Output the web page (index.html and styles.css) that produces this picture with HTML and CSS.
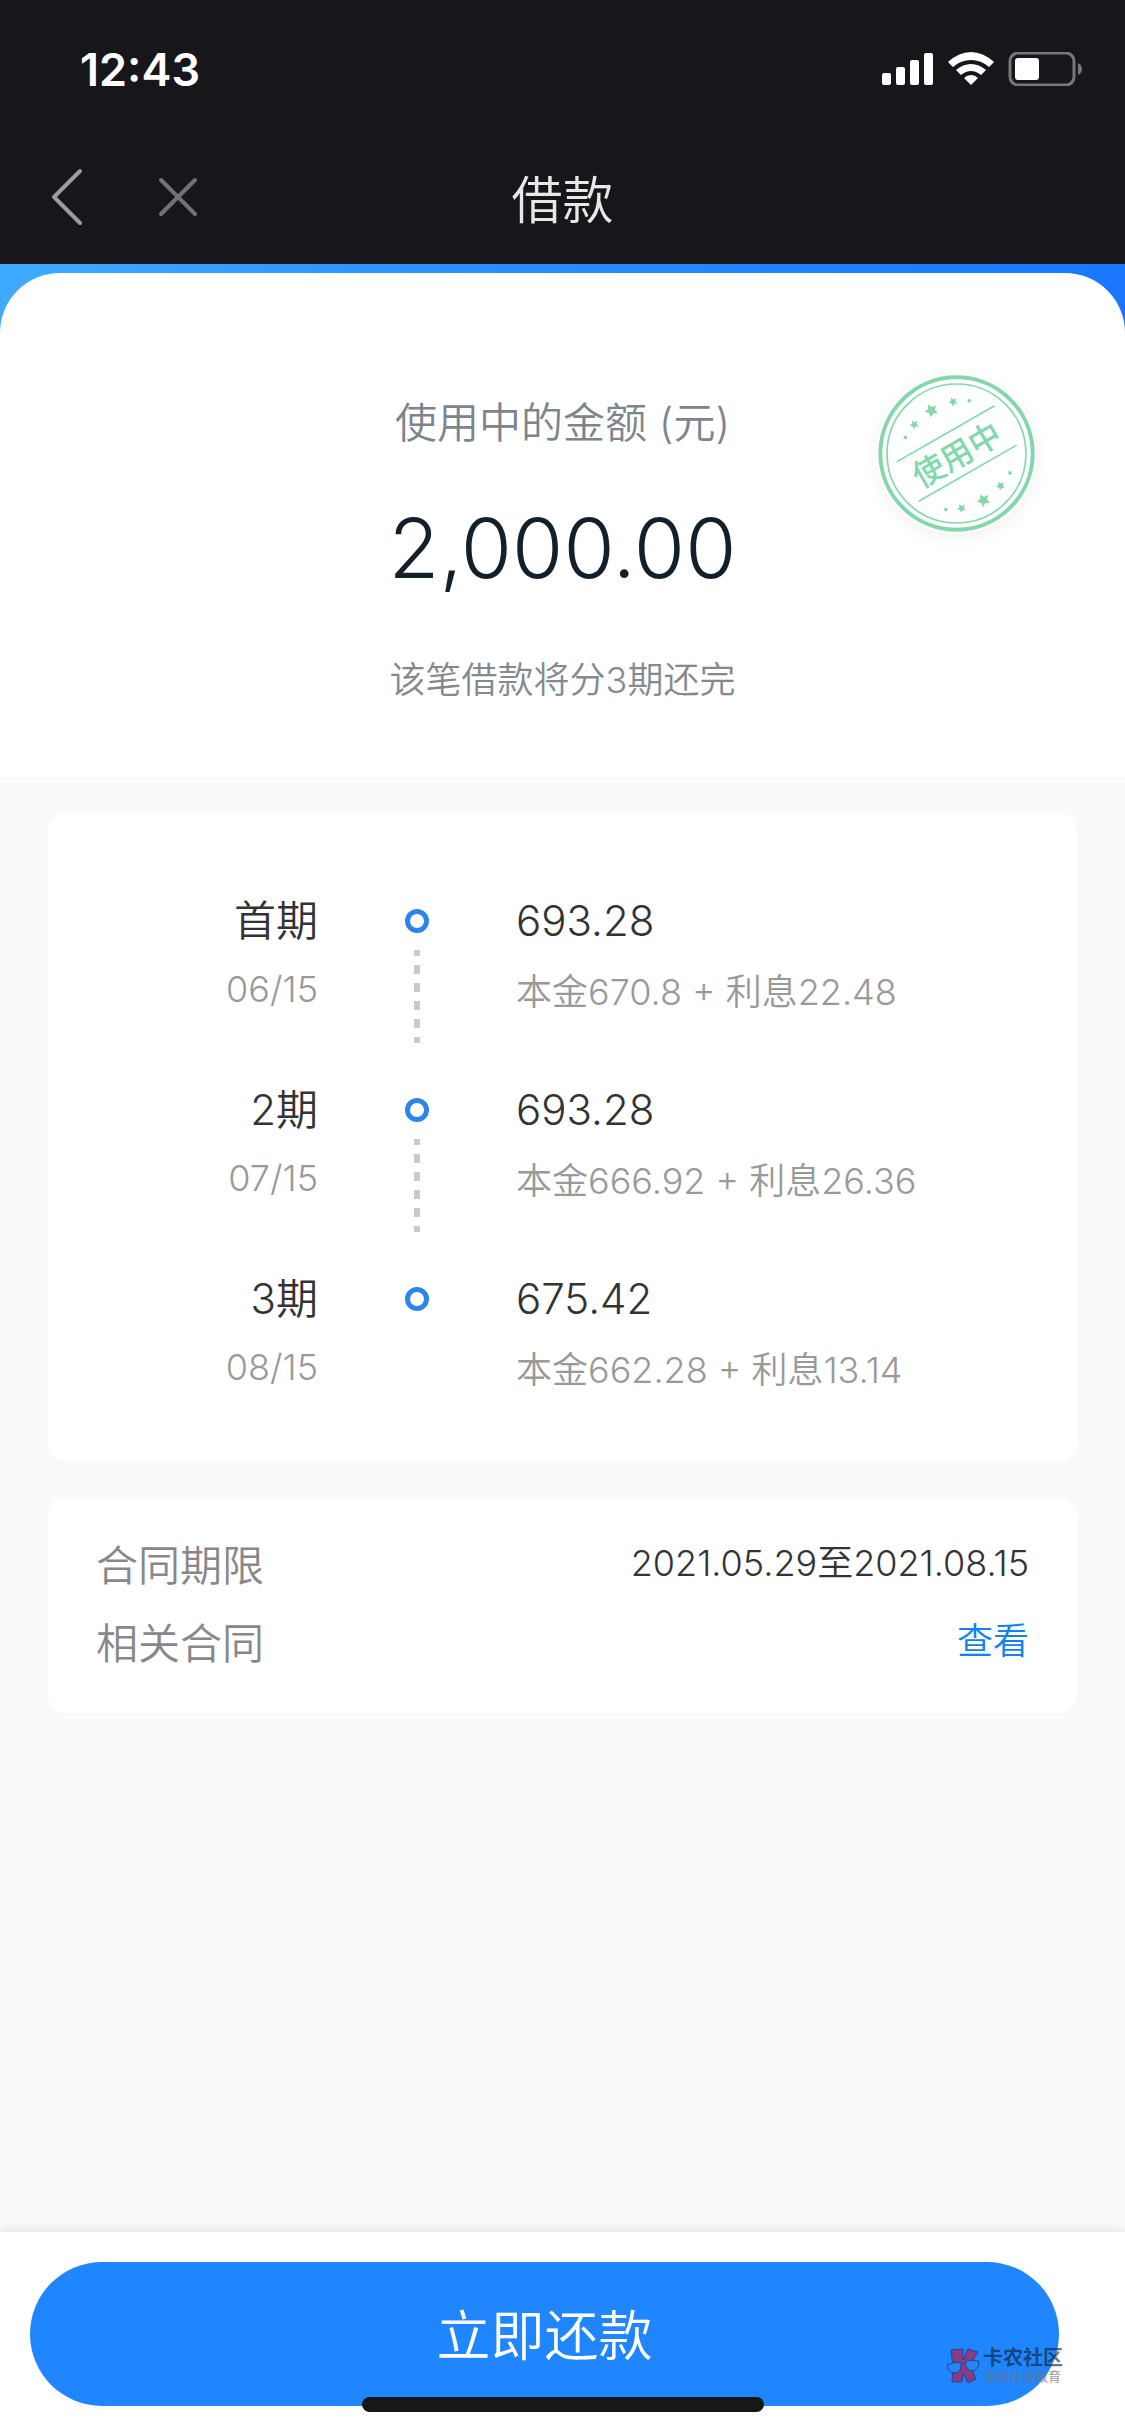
FILE: index.html
```html
<!DOCTYPE html>
<html lang="zh-CN">
<head>
    <meta charset="UTF-8">
    <meta name="viewport" content="width=device-width, initial-scale=1.0">
    <title>借款</title>
    <link rel="stylesheet" href="styles.css">
</head>
<body>
    <header class="top">
        <div class="status-bar">
            <span class="time">12:43</span>
            <svg class="status-icons" viewBox="0 0 202 34" aria-hidden="true">
                <g fill="#fff">
                    <rect x="0" y="21" width="9" height="12" rx="2"/>
                    <rect x="14" y="15" width="9" height="18" rx="2"/>
                    <rect x="28" y="8" width="9" height="25" rx="2"/>
                    <rect x="42" y="1" width="9" height="32" rx="2"/>
                    <path d="M66 10Q77 0 89 0T112 10L107 15Q99 8 89 8T71 15Z"/>
                    <path d="M74 18Q81 12 89 12T104 18L99 23Q94 19 89 19T79 23Z"/>
                    <path d="M82 26Q85 23 89 23T96 26L89 33Z"/>
                    <rect x="133" y="6" width="24" height="22" rx="3"/>
                </g>
                <rect x="128" y="1" width="64" height="32" rx="8" fill="none" stroke="#77777b" stroke-width="3"/>
                <path d="M196 11Q200 13 200 17T196 23Z" fill="#77777b"/>
            </svg>
        </div>
        <nav class="nav-bar">
            <div class="nav-buttons">
                <button class="nav-btn" aria-label="返回">
                    <svg width="34" height="58" viewBox="0 0 34 58"><path d="M30 3L4 29L30 55" fill="none" stroke="#9c9c9e" stroke-width="4" stroke-linecap="round" stroke-linejoin="round"/></svg>
                </button>
                <button class="nav-btn" aria-label="关闭">
                    <svg width="40" height="40" viewBox="0 0 40 40"><path d="M3 3L37 37M37 3L3 37" fill="none" stroke="#727274" stroke-width="4" stroke-linecap="round"/></svg>
                </button>
            </div>
            <h1 class="nav-title">借款</h1>
        </nav>
    </header>

    <main>
        <div class="hero-wrap">
            <section class="hero">
                <p class="hero-label">使用中的金额 (元)</p>
                <p class="hero-amount">2,000.00</p>
                <p class="hero-note">该笔借款将分3期还完</p>
                <svg class="stamp" viewBox="80 68 482 482" role="img" aria-label="使用中">
                    <defs>
                        <path id="star" d="M0-10L2.9-4L9.5-3.1L4.8 1.5L5.9 8.1L0 5L-5.9 8.1L-4.8 1.5L-9.5-3.1L-2.9-4Z"/>
                    </defs>
                    <g fill="none" stroke="#82d8ac">
                        <circle cx="321" cy="309" r="228" stroke-width="12"/>
                        <circle cx="321" cy="309" r="208" stroke-width="5"/>
                        <path d="M142 334L435 166M208 452L501 284" stroke-width="5"/>
                    </g>
                    <g fill="#82d8ac">
                        <use href="#star" transform="translate(168 261) rotate(-30) scale(.8)"/>
                        <use href="#star" transform="translate(195 222) rotate(-30) scale(1.4)"/>
                        <use href="#star" transform="translate(246 180) rotate(-30) scale(2.1)"/>
                        <use href="#star" transform="translate(311 154) rotate(-30) scale(1.4)"/>
                        <use href="#star" transform="translate(359 151) rotate(-30) scale(.8)"/>
                        <use href="#star" transform="translate(289 477) rotate(-30) scale(.8)"/>
                        <use href="#star" transform="translate(336 473) rotate(-30) scale(1.4)"/>
                        <use href="#star" transform="translate(402 449) rotate(-30) scale(2.1)"/>
                        <use href="#star" transform="translate(453 406) rotate(-30) scale(1.4)"/>
                        <use href="#star" transform="translate(481 367) rotate(-30) scale(.8)"/>
                        <text class="stamp-text" x="321" y="348" text-anchor="middle" transform="rotate(-30 321 312)">使用中</text>
                    </g>
                </svg>
            </section>
        </div>

        <ol class="card plan">
            <li class="period">
                <div class="period-when">
                    <div class="period-name">首期</div>
                    <div class="period-date">06/15</div>
                </div>
                <div class="period-mark"></div>
                <div class="period-pay">
                    <div class="period-total">693.28</div>
                    <div class="period-detail">本金670.8 + 利息22.48</div>
                </div>
            </li>
            <li class="period">
                <div class="period-when">
                    <div class="period-name">2期</div>
                    <div class="period-date">07/15</div>
                </div>
                <div class="period-mark"></div>
                <div class="period-pay">
                    <div class="period-total">693.28</div>
                    <div class="period-detail">本金666.92 + 利息26.36</div>
                </div>
            </li>
            <li class="period">
                <div class="period-when">
                    <div class="period-name">3期</div>
                    <div class="period-date">08/15</div>
                </div>
                <div class="period-mark"></div>
                <div class="period-pay">
                    <div class="period-total">675.42</div>
                    <div class="period-detail">本金662.28 + 利息13.14</div>
                </div>
            </li>
        </ol>

        <dl class="card contract">
            <div class="contract-row">
                <dt>合同期限</dt>
                <dd>2021.05.29至2021.08.15</dd>
            </div>
            <div class="contract-row">
                <dt>相关合同</dt>
                <dd><a href="#">查看</a></dd>
            </div>
        </dl>
    </main>

    <footer class="footer">
        <button class="repay">立即还款</button>
        <div class="watermark">
            <svg width="36" height="36" viewBox="0 0 36 36" aria-hidden="true">
                <g fill="#8a3b86" stroke="#174a8c" stroke-width="1">
                    <path d="M6 2L18 1L18 12L23 1L33 4L25 17L31 31L23 35L18 25L17 34L7 34L8 18Z"/>
                </g>
                <g fill="#2a84f0" stroke="#174a8c" stroke-width="1">
                    <path d="M2 17Q9 13 16 15Q17 25 9 25Q3 24 2 17Z"/>
                    <path d="M20 14Q27 11 34 13Q34 22 27 23Q21 22 20 14Z"/>
                    <path d="M16 16L20 15" fill="none"/>
                </g>
            </svg>
            <div>
                <div class="watermark-name">卡农社区</div>
                <div class="watermark-sub">金融在线教育</div>
            </div>
        </div>
        <div class="home-indicator"></div>
    </footer>
</body>
</html>
```

FILE: styles.css
```css
*,
*::before,
*::after {
    margin: 0;
    padding: 0;
    box-sizing: border-box;
}
body {
    font-family: Inter, "Noto Sans CJK SC", sans-serif;
    font-weight: 350;
    color: #333;
    background: #f9f9f9;
    display: flex;
    flex-direction: column;
    min-height: 100vh;
}
button {
    font: inherit;
    border: none;
    background: none;
    cursor: pointer;
}

/* status bar + title */
.top {
    background: #17161b;
}
.status-bar {
    display: flex;
    justify-content: space-between;
    align-items: center;
    height: 132px;
    padding: 6px 41px 0 80px;
}
.time {
    font-size: 45px;
    font-weight: 600;
    color: #fff;
}
.status-icons {
    width: 202px;
    height: 34px;
}
.nav-bar {
    display: grid;
    grid-template-columns: 1fr auto 1fr;
    align-items: center;
    height: 132px;
    padding: 0 50px 2px;
}
.nav-buttons {
    display: flex;
    align-items: center;
    gap: 74px;
}
.nav-btn {
    display: flex;
}
.nav-title {
    font-size: 51px;
    font-weight: 350;
    color: #e8e8e8;
}

/* amount in use */
.hero-wrap {
    padding-top: 9px;
    background: linear-gradient(90deg, #3eabff, #2a8dff 45%, #1a76ff);
}
.hero {
    position: relative;
    padding: 120px 0 72px;
    text-align: center;
    background: #fff;
    border-radius: 60px 60px 0 0;
}
.hero-label {
    font-size: 42px;
    line-height: 60px;
    color: #7d858c;
}
.hero-amount {
    margin: 45px 0 57px;
    font-size: 83px;
    line-height: 100px;
    color: #13202c;
}
.hero-note {
    font-size: 36px;
    line-height: 50px;
    color: #84898e;
}
.stamp {
    position: absolute;
    top: 100px;
    right: 88px;
    width: 161px;
    height: 161px;
    border-radius: 50%;
    box-shadow: 0 4px 16px rgba(0, 0, 0, 0.06);
}
.stamp-text {
    font-size: 96px;
    font-weight: 500;
}

/* cards */
.card {
    margin: 36px 48px 0;
    background: #fff;
    border-radius: 18px;
}
.plan {
    padding: 78px 48px 50px 0;
    list-style: none;
}
.period {
    display: grid;
    grid-template-columns: 270px 198px 1fr;
}
.period:not(:last-child) {
    padding-bottom: 47px;
}
.period-when {
    text-align: right;
}
.period-name,
.period-total {
    font-size: 42px;
    line-height: 60px;
}
.period-date,
.period-detail {
    font-size: 36px;
    line-height: 76px;
    color: #999;
}
.period-detail {
    line-height: 82px;
}
.period-mark {
    display: flex;
    flex-direction: column;
    align-items: center;
    gap: 17px;
    padding-top: 18px;
}
.period-mark::before {
    content: "";
    width: 24px;
    height: 24px;
    border: 5px solid #2b85ea;
    border-radius: 50%;
}
.period:not(:last-child) .period-mark::after {
    content: "";
    width: 6px;
    height: 93px;
    margin-bottom: -10px;
    background: repeating-linear-gradient(#c9c9c9 0 6px, transparent 6px 15px, #c9c9c9 15px 18px);
}
.contract {
    padding: 30px 48px;
}
.contract-row {
    display: flex;
    justify-content: space-between;
    align-items: flex-start;
}
.contract dt {
    font-size: 42px;
    line-height: 78px;
    color: #888;
}
.contract dd {
    font-size: 36px;
    line-height: 72px;
}
.contract a {
    color: #0f83ee;
    text-decoration: none;
}

/* bottom bar */
.footer {
    position: relative;
    margin-top: auto;
    padding: 30px 66px 30px 30px;
    background: #fff;
    box-shadow: 0 0 12px rgba(0, 0, 0, 0.12);
}
.repay {
    display: block;
    width: 100%;
    height: 144px;
    padding-bottom: 4px;
    font-size: 54px;
    color: #fff;
    background: #1f86ff;
    border-radius: 72px;
}
.watermark {
    position: absolute;
    right: 62px;
    bottom: 52px;
    display: flex;
    align-items: center;
    gap: 2px;
}
.watermark-name {
    font-size: 20px;
    font-weight: 700;
    line-height: 20px;
    color: rgba(20, 30, 50, 0.65);
}
.watermark-sub {
    font-size: 13px;
    font-weight: 400;
    line-height: 16px;
    color: rgba(110, 115, 125, 0.75);
}
.home-indicator {
    position: absolute;
    left: 50%;
    bottom: 24px;
    width: 402px;
    height: 15px;
    background: #171717;
    border-radius: 8px;
    transform: translateX(-50%);
}
```
